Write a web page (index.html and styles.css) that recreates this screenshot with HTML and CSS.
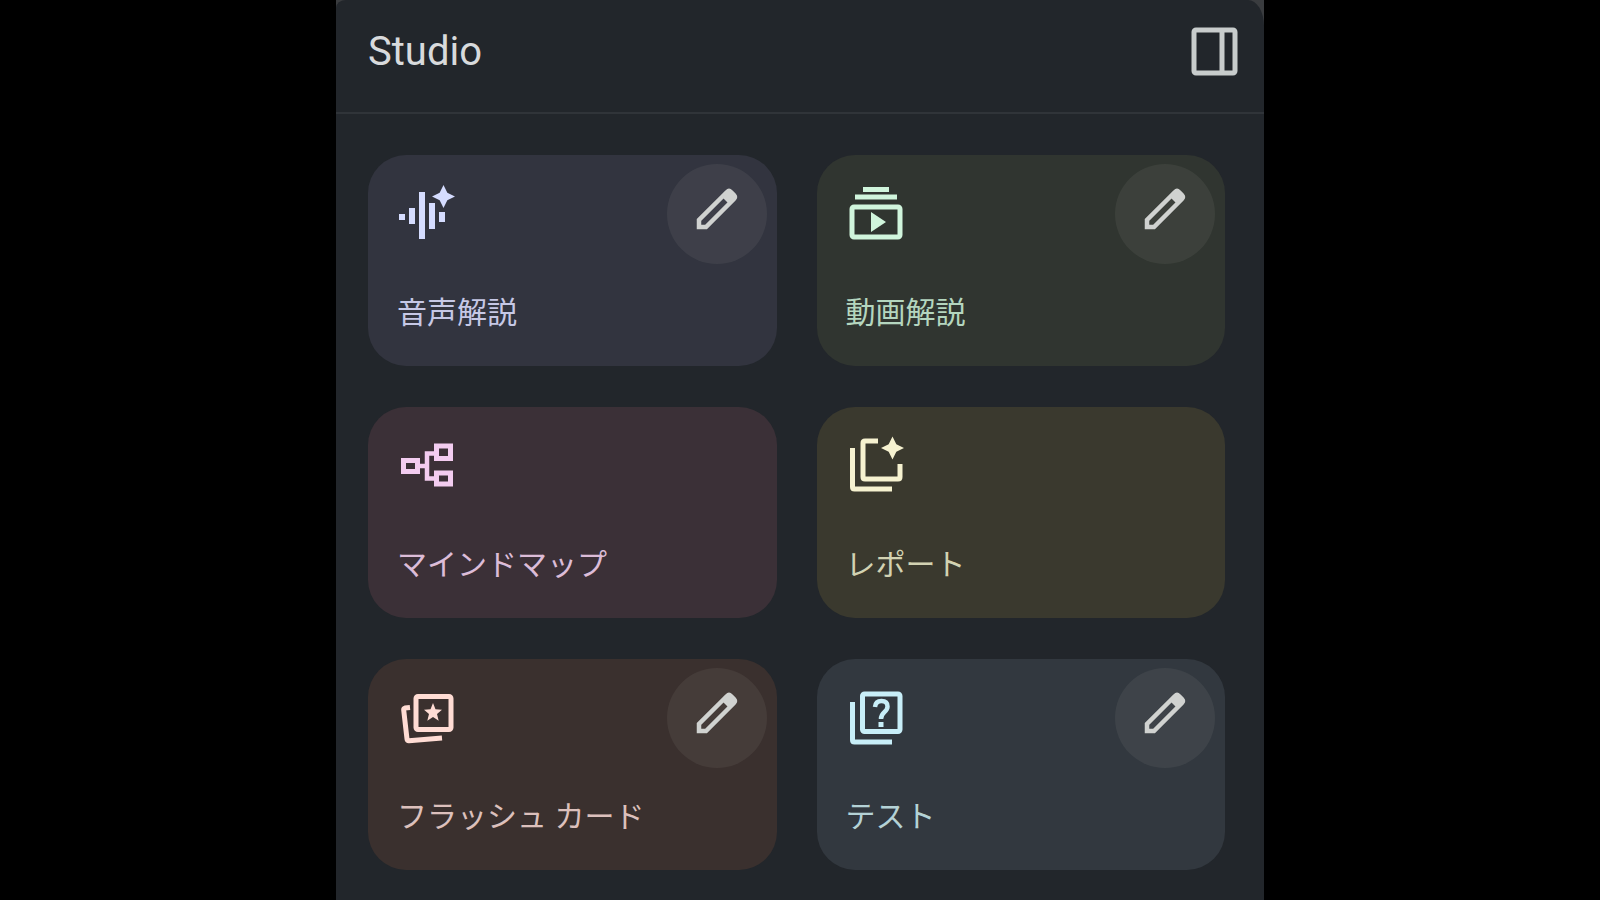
FILE: index.html
```html
<!DOCTYPE html>
<html lang="ja">
<head>
    <meta charset="UTF-8">
    <meta name="viewport" content="width=device-width, initial-scale=1.0">
    <title>Studio</title>
    <link rel="stylesheet" href="styles.css">
</head>
<body>
    <!-- shared shapes -->
    <svg class="sprite" aria-hidden="true">
        <symbol id="pencil" viewBox="0 0 48 48">
            <path d="M6 41V34L34 6q2-2 4 0l3 3q2 2 0 4L13 41z" fill="none" stroke="currentColor" stroke-width="4.5"/>
            <path d="M29 11l7-6 7 7-6 7z" fill="currentColor"/>
        </symbol>
        <symbol id="sparkle" viewBox="0 0 24 24">
            <path d="M12 0l4 8 8 4-8 4-4 8-4-8-8-4 8-4z" fill="currentColor"/>
        </symbol>
    </svg>

    <div class="backdrop">
        <main class="panel">
            <header class="panel-header">
                <h1>Studio</h1>
                <button class="toggle-btn" type="button" aria-label="パネルを閉じる">
                    <svg viewBox="0 0 64 64" fill="none" stroke="currentColor" stroke-width="5">
                        <rect x="11" y="10" width="41" height="43" rx="2"/>
                        <path d="M39 10v43"/>
                    </svg>
                </button>
            </header>

            <div class="cards">
                <div class="card audio">
                    <button class="card-main" type="button">
                        <svg class="icon" viewBox="0 0 64 64" fill="currentColor">
                            <path d="M3 33h6v6H3zM13 27h6v16h-6zM23 11h6v47h-6zM33 22h6v26h-6zM43 31h6v10h-6z"/>
                            <use href="#sparkle" x="36" y="4" width="23" height="23"/>
                        </svg>
                        <span>音声解説</span>
                    </button>
                    <button class="edit-btn" type="button" aria-label="音声解説を編集"><svg><use href="#pencil"/></svg></button>
                </div>

                <div class="card video">
                    <button class="card-main" type="button">
                        <svg class="icon" viewBox="1 0 64 64" fill="currentColor">
                            <path d="M19 6h26v5H19zM11 13.500h42v5H11zM27 31v20l15-10z"/>
                            <rect x="8" y="26" width="48" height="30" rx="2" fill="none" stroke="currentColor" stroke-width="5"/>
                        </svg>
                        <span>動画解説</span>
                    </button>
                    <button class="edit-btn" type="button" aria-label="動画解説を編集"><svg><use href="#pencil"/></svg></button>
                </div>

                <div class="card mindmap">
                    <button class="card-main" type="button">
                        <svg class="icon" viewBox="0 0 64 64" fill="none" stroke="currentColor" stroke-width="5">
                            <path d="M7.500 27.500h14v11h-14zM40.500 13h14v12.500h-14zM40.500 40h14v11h-14z"/>
                            <path d="M22 33h9M40 20.500h-9v25h9" stroke-width="4.500"/>
                        </svg>
                        <span>マインドマップ</span>
                    </button>
                </div>

                <div class="card report">
                    <button class="card-main" type="button">
                        <svg class="icon" viewBox="1 0 64 64" fill="none" stroke="currentColor" stroke-width="5">
                            <path d="M8.500 15v39q0 2 2 2H48"/>
                            <path d="M34 8H21q-2 0-2 2v34q0 2 2 2h33q2 0 2-2V31"/>
                            <use href="#sparkle" x="37" y="3" width="23" height="24" stroke="none"/>
                        </svg>
                        <span>レポート</span>
                    </button>
                </div>

                <div class="card flash">
                    <button class="card-main" type="button">
                        <svg class="icon" viewBox="0 0 64 64" fill="none" stroke="currentColor" stroke-width="5">
                            <rect x="20" y="11.500" width="35" height="33" rx="2"/>
                            <path d="M14 22.500l-5 .5q-1.500.5-1.300 2l3.300 29q.2 2 2 1.800L46 53"/>
                            <path d="M37 18l2.500 6.300 6.500.5-5 4.300 1.700 6.700L37 32l-5.700 3.800L33 29.100l-5-4.300 6.500-.5z" fill="currentColor" stroke="none"/>
                        </svg>
                        <span>フラッシュ カード</span>
                    </button>
                    <button class="edit-btn" type="button" aria-label="フラッシュ カードを編集"><svg><use href="#pencil"/></svg></button>
                </div>

                <div class="card quiz">
                    <button class="card-main" type="button">
                        <svg class="icon" viewBox="1 0 64 64" fill="none" stroke="currentColor" stroke-width="5">
                            <path d="M8.500 17v38q0 2 2 2H48"/>
                            <rect x="18.500" y="9" width="37.500" height="37.500" rx="2"/>
                            <path d="M31 22q.5-6 6.500-6 6 0 6 5.500 0 3-3 5.500-3.500 3-3.500 7" stroke-width="4.500"/>
                            <path d="M34.500 37h5v5h-5z" fill="currentColor" stroke="none"/>
                        </svg>
                        <span>テスト</span>
                    </button>
                    <button class="edit-btn" type="button" aria-label="テストを編集"><svg><use href="#pencil"/></svg></button>
                </div>
            </div>
        </main>
    </div>
</body>
</html>
```

FILE: styles.css
```css
*{
    padding: 0;
    margin: 0;
    box-sizing: border-box;
}
body{
    background: #000;
    font-family: Roboto, "Noto Sans CJK JP", sans-serif;
}
button{
    background: none;
    border: none;
    font: inherit;
    color: inherit;
    cursor: pointer;
}
.sprite{
    position: absolute;
    width: 0;
    height: 0;
}
.backdrop{
    max-width: 928px;
    margin: 0 auto;
    background: #3a3c3f;
}
.panel{
    min-height: 100vh;
    background: #22262b;
    border-radius: 10px 16px 0 0 / 8px 26px 0 0;
}
.panel-header{
    display: flex;
    justify-content: space-between;
    align-items: center;
    height: 114px;
    padding: 0 17px 8px 32px;
    border-bottom: 2px solid #303439;
}
.panel-header h1{
    font-size: 40px;
    font-weight: 400;
    line-height: 48px;
    color: #d8dadc;
}
.toggle-btn{
    width: 64px;
    height: 64px;
    color: #c8cccc;
}
.toggle-btn svg{
    display: block;
}
.cards{
    display: grid;
    grid-template-columns: 1fr 1fr;
    gap: 41px 40px;
    padding: 41px 39px 30px 32px;
}
.card{
    position: relative;
    border-radius: 38px;
}
.card-main{
    display: flex;
    flex-direction: column;
    align-items: flex-start;
    gap: 46px;
    width: 100%;
    padding: 26px 28px 31px;
    font-size: 30px;
    line-height: 44px;
    text-align: left;
}
.card-main span{
    padding-left: 1px;
}
.icon{
    width: 64px;
    height: 64px;
}
.edit-btn{
    position: absolute;
    top: 9px;
    right: 10px;
    display: flex;
    justify-content: center;
    align-items: center;
    width: 100px;
    height: 100px;
    padding-bottom: 8px;
    border-radius: 50%;
    background: rgba(255, 250, 235, 0.06);
    color: #d0d2d0;
}
.edit-btn svg{
    width: 48px;
    height: 48px;
}

/* card colours */
.audio{
    background: #32343f;
    color: #c6c8e6;
}
.audio .icon{
    color: #d5dcff;
}
.video{
    background: #303530;
    color: #b4d6bf;
}
.video .icon{
    color: #d0f5dc;
}
.mindmap{
    background: #3b3037;
    color: #dcbcd8;
}
.mindmap .icon{
    color: #f3ccf0;
}
.report{
    background: #3a392e;
    color: #d2d2b2;
}
.report .icon{
    color: #f6f2d0;
}
.flash{
    background: #3a302e;
    color: #dcc0bc;
}
.flash .icon{
    color: #ffdcd4;
}
.quiz{
    background: #32383f;
    color: #b4d2d6;
}
.quiz .icon{
    color: #c8eef8;
}
```
